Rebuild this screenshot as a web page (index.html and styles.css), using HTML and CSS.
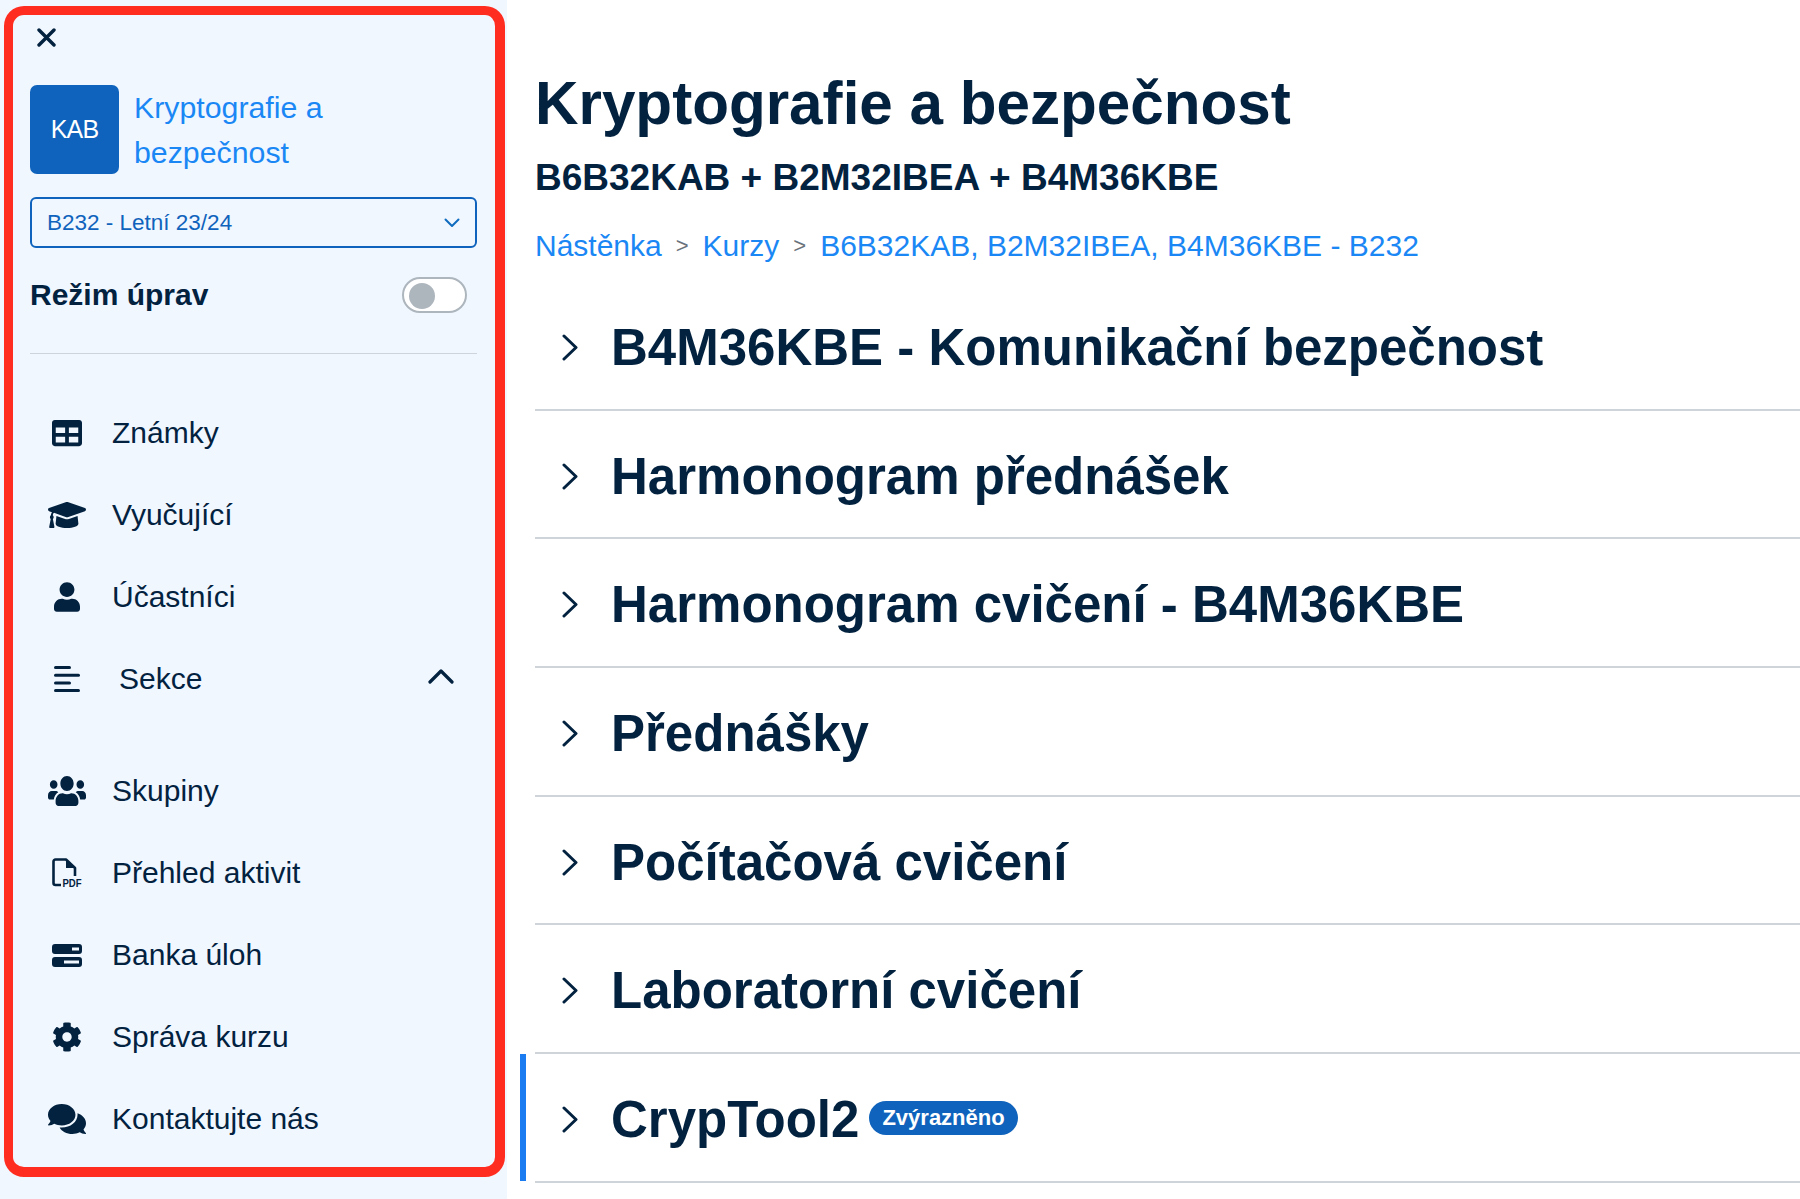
FILE: index.html
```html
<!DOCTYPE html>
<html lang="cs">
<head>
  <meta charset="UTF-8">
  <title>Kryptografie a bezpečnost</title>
  <link rel="stylesheet" href="styles.css">
</head>
<body>
  <aside class="sidebar">
    <div class="frame">
      <button class="close" aria-label="Zavřít">
        <svg viewBox="0 0 19 19" width="19" height="19"><path d="M2 2l15 15M17 2L2 17" fill="none" stroke="#03223f" stroke-width="3.4" stroke-linecap="round"/></svg>
      </button>

      <div class="course">
        <div class="tile">KAB</div>
        <a class="course-name">Kryptografie a bezpečnost</a>
      </div>

      <div class="select">
        <span>B232 - Letní 23/24</span>
        <svg viewBox="0 0 16 10" width="16" height="10"><path d="M1.5 1.5L8 8l6.5-6.5" fill="none" stroke="#0f6cbf" stroke-width="2" stroke-linecap="round" stroke-linejoin="round"/></svg>
      </div>

      <div class="edit-mode">
        <span>Režim úprav</span>
        <div class="toggle"><div class="knob"></div></div>
      </div>

      <hr class="divider">

      <nav class="nav">
        <a class="nav-item">
          <span class="ico"><svg viewBox="0 0 512 512" width="30" height="30"><path d="M464 32H48C21.49 32 0 53.49 0 80v352c0 26.51 21.49 48 48 48h416c26.51 0 48-21.49 48-48V80c0-26.51-21.49-48-48-48zM224 416H64v-96h160v96zm0-160H64v-96h160v96zm224 160H288v-96h160v96zm0-160H288v-96h160v96z"/></svg></span>
          Známky
        </a>
        <a class="nav-item">
          <span class="ico"><svg viewBox="0 64 640 384" width="38" height="26" preserveAspectRatio="none"><path d="M622.34 153.2L343.4 67.5c-15.2-4.67-31.6-4.67-46.79 0L17.66 153.2c-23.54 7.23-23.54 38.36 0 45.59l48.63 14.94c-10.67 13.19-17.23 29.28-17.88 46.9C38.78 266.15 32 276.11 32 288c0 10.78 5.68 19.85 13.86 25.65L20.33 428.53C18.11 438.52 25.71 448 35.94 448h56.11c10.24 0 17.84-9.48 15.62-19.47L82.14 313.65C90.32 307.85 96 298.78 96 288c0-11.57-6.47-21.25-15.66-26.87.76-15.02 8.44-28.3 20.69-36.72L296.6 284.5c9.06 2.78 26.44 6.25 46.79 0l278.95-85.7c23.55-7.24 23.55-38.36 0-45.6zM352.79 315.09c-28.53 8.76-52.84 3.92-65.59 0l-145.02-44.55L128 384c0 35.35 85.96 64 192 64s192-28.65 192-64l-14.18-113.47-145.03 44.56z"/></svg></span>
          Vyučující
        </a>
        <a class="nav-item">
          <span class="ico"><svg viewBox="0 0 448 512" width="26" height="30"><path d="M224 256c70.7 0 128-57.3 128-128S294.7 0 224 0 96 57.3 96 128s57.3 128 128 128zm89.6 32h-16.7c-22.2 10.2-46.9 16-72.9 16s-50.6-5.8-72.9-16h-16.7C60.2 288 0 348.2 0 422.4V464c0 26.5 21.5 48 48 48h352c26.5 0 48-21.5 48-48v-41.6c0-74.2-60.2-134.4-134.4-134.4z"/></svg></span>
          Účastníci
        </a>
        <a class="nav-item nav-sections">
          <span class="ico"><svg viewBox="0 0 26 26" width="26" height="26"><rect x="0" y="0" width="17" height="3" rx="1.5"/><rect x="0" y="7.7" width="26" height="3" rx="1.5"/><rect x="0" y="15.4" width="17" height="3" rx="1.5"/><rect x="0" y="23" width="26" height="3" rx="1.5"/></svg></span>
          <span class="sections-label">Sekce</span>
          <svg class="caret" viewBox="0 0 26 15" width="26" height="15"><path d="M2 13L13 2l11 11" fill="none" stroke="#03223f" stroke-width="3.2" stroke-linecap="round" stroke-linejoin="round"/></svg>
        </a>
        <a class="nav-item nav-after">
          <span class="ico"><svg viewBox="0 32 640 448" width="38" height="30" preserveAspectRatio="none"><path d="M96 224c35.3 0 64-28.7 64-64s-28.7-64-64-64-64 28.7-64 64 28.7 64 64 64zm448 0c35.3 0 64-28.7 64-64s-28.7-64-64-64-64 28.7-64 64 28.7 64 64 64zm32 32h-64c-17.6 0-33.5 7.1-45.1 18.6 40.3 22.1 68.9 62 75.1 109.4h66c17.7 0 32-14.3 32-32v-32c0-35.3-28.7-64-64-64zm-256 0c61.9 0 112-50.1 112-112S381.9 32 320 32 208 82.1 208 144s50.1 112 112 112zm76.8 32h-8.3c-20.8 10-43.9 16-68.5 16s-47.6-6-68.5-16h-8.3C179.6 288 128 339.6 128 403.2V432c0 26.5 21.5 48 48 48h288c26.5 0 48-21.5 48-48v-28.8c0-63.6-51.6-115.2-115.2-115.2zm-223.7-13.4C161.5 263.1 145.6 256 128 256H64c-35.3 0-64 28.7-64 64v32c0 17.7 14.3 32 32 32h65.9c6.3-47.4 34.9-87.3 75.2-109.4z"/></svg></span>
          Skupiny
        </a>
        <a class="nav-item">
          <span class="ico"><svg viewBox="0 0 30 33" width="30" height="33"><path d="M14 28H3.5A2 2 0 0 1 1.5 26V4.5A2 2 0 0 1 3.5 2.5H14L23 11v8" fill="none" stroke="#03223f" stroke-width="2.6" stroke-linejoin="round"/><path d="M14 2.5V11h9z"/><rect x="9" y="20.5" width="21" height="10" fill="#f0f7ff"/><text class="pdf-text" transform="translate(10.5 29.5) scale(.83 1)">PDF</text></svg></span>
          Přehled aktivit
        </a>
        <a class="nav-item">
          <span class="ico"><svg viewBox="0 0 30 23" width="30" height="23"><path fill-rule="evenodd" d="M3 0h24a3 3 0 0 1 3 3v4a3 3 0 0 1-3 3H3a3 3 0 0 1-3-3V3a3 3 0 0 1 3-3zm17 3.5v3h7v-3zM3 13h24a3 3 0 0 1 3 3v4a3 3 0 0 1-3 3H3a3 3 0 0 1-3-3v-4a3 3 0 0 1 3-3zm9 3.5v3h15v-3z"/></svg></span>
          Banka úloh
        </a>
        <a class="nav-item">
          <span class="ico"><svg viewBox="0 0 512 512" width="30" height="30"><path d="M487.4 315.7l-42.6-24.6c4.3-23.2 4.3-47 0-70.2l42.6-24.6c4.9-2.8 7.1-8.6 5.5-14-11.1-35.6-30-67.8-54.7-94.6-3.8-4.1-10-5.1-14.8-2.3L380.8 110c-17.9-15.4-38.5-27.3-60.8-35.1V25.8c0-5.6-3.9-10.5-9.4-11.7-36.7-8.2-74.3-7.8-109.2 0-5.5 1.2-9.4 6.1-9.4 11.7V75c-22.2 7.9-42.8 19.8-60.8 35.1L88.7 85.5c-4.9-2.8-11-1.9-14.8 2.3-24.7 26.7-43.6 58.9-54.7 94.6-1.7 5.4.6 11.2 5.5 14L67.3 221c-4.3 23.2-4.3 47 0 70.2l-42.6 24.6c-4.9 2.8-7.1 8.6-5.5 14 11.1 35.6 30 67.8 54.7 94.6 3.8 4.1 10 5.1 14.8 2.3l42.6-24.6c17.9 15.4 38.5 27.3 60.8 35.1v49.2c0 5.6 3.9 10.5 9.4 11.7 36.7 8.2 74.3 7.8 109.2 0 5.5-1.2 9.4-6.1 9.4-11.7v-49.2c22.2-7.9 42.8-19.8 60.8-35.1l42.6 24.6c4.9 2.8 11 1.9 14.8-2.3 24.7-26.7 43.6-58.9 54.7-94.6 1.5-5.5-.7-11.3-5.6-14.1zM256 336c-44.1 0-80-35.9-80-80s35.9-80 80-80 80 35.9 80 80-35.9 80-80 80z"/></svg></span>
          Správa kurzu
        </a>
        <a class="nav-item">
          <span class="ico"><svg viewBox="0 32 576 448" width="38" height="30" preserveAspectRatio="none"><path d="M416 192c0-88.4-93.1-160-208-160S0 103.6 0 192c0 34.3 14.1 65.9 38 92-13.4 30.2-35.5 54.2-35.8 54.5-2.2 2.3-2.8 5.7-1.5 8.7S4.8 352 8 352c36.6 0 66.9-12.3 88.7-25 32.2 15.7 70.3 25 111.3 25 114.9 0 208-71.6 208-160zm122 220c23.9-26 38-57.7 38-92 0-66.9-53.5-124.2-129.3-148.1.9 6.6 1.3 13.3 1.3 20.1 0 105.9-107.7 192-240 192-10.8 0-21.3-.8-31.7-1.9C207.8 439.6 281.8 480 368 480c41 0 79.1-9.2 111.3-25 21.8 12.7 52.1 25 88.7 25 3.2 0 6.1-1.9 7.3-4.8 1.3-2.9.7-6.3-1.5-8.7-.3-.3-22.4-24.2-35.8-54.5z"/></svg></span>
          Kontaktujte nás
        </a>
      </nav>
    </div>
  </aside>

  <main class="content">
    <h1 class="page-title">Kryptografie a bezpečnost</h1>
    <div class="page-sub">B6B32KAB + B2M32IBEA + B4M36KBE</div>

    <div class="breadcrumb">
      <a>Nástěnka</a>
      <span class="sep">&gt;</span>
      <a>Kurzy</a>
      <span class="sep">&gt;</span>
      <a>B6B32KAB, B2M32IBEA, B4M36KBE - B232</a>
    </div>

    <section class="topic">
      <svg class="chev" viewBox="0 0 16 27" width="16" height="27"><path d="M2 2l12 11.5L2 25" fill="none" stroke="#03223f" stroke-width="3" stroke-linecap="round" stroke-linejoin="round"/></svg>
      <h2>B4M36KBE - Komunikační bezpečnost</h2>
    </section>
    <section class="topic">
      <svg class="chev" viewBox="0 0 16 27" width="16" height="27"><path d="M2 2l12 11.5L2 25" fill="none" stroke="#03223f" stroke-width="3" stroke-linecap="round" stroke-linejoin="round"/></svg>
      <h2>Harmonogram přednášek</h2>
    </section>
    <section class="topic">
      <svg class="chev" viewBox="0 0 16 27" width="16" height="27"><path d="M2 2l12 11.5L2 25" fill="none" stroke="#03223f" stroke-width="3" stroke-linecap="round" stroke-linejoin="round"/></svg>
      <h2>Harmonogram cvičení - B4M36KBE</h2>
    </section>
    <section class="topic">
      <svg class="chev" viewBox="0 0 16 27" width="16" height="27"><path d="M2 2l12 11.5L2 25" fill="none" stroke="#03223f" stroke-width="3" stroke-linecap="round" stroke-linejoin="round"/></svg>
      <h2>Přednášky</h2>
    </section>
    <section class="topic">
      <svg class="chev" viewBox="0 0 16 27" width="16" height="27"><path d="M2 2l12 11.5L2 25" fill="none" stroke="#03223f" stroke-width="3" stroke-linecap="round" stroke-linejoin="round"/></svg>
      <h2>Počítačová cvičení</h2>
    </section>
    <section class="topic">
      <svg class="chev" viewBox="0 0 16 27" width="16" height="27"><path d="M2 2l12 11.5L2 25" fill="none" stroke="#03223f" stroke-width="3" stroke-linecap="round" stroke-linejoin="round"/></svg>
      <h2>Laboratorní cvičení</h2>
    </section>
    <section class="topic highlighted">
      <svg class="chev" viewBox="0 0 16 27" width="16" height="27"><path d="M2 2l12 11.5L2 25" fill="none" stroke="#03223f" stroke-width="3" stroke-linecap="round" stroke-linejoin="round"/></svg>
      <h2>CrypTool2</h2>
      <span class="badge">Zvýrazněno</span>
    </section>
  </main>
</body>
</html>
```

FILE: styles.css
```css
* {
  box-sizing: border-box;
}

html, body {
  height: 100%;
}

body {
  margin: 0;
  display: flex;
  height: 1199px;
  overflow: hidden;
  background-color: #fff;
  color: #03223f;
  font-family: "Liberation Sans", Arial, sans-serif;
}

/* Sidebar */
.sidebar {
  width: 507px;
  flex-shrink: 0;
  background-color: #f0f7ff;
  padding: 6px 2px 22px 4px;
}

.frame {
  height: 100%;
  border: 10px solid #ff2d20;
  border-left-width: 9px;
  border-top-width: 9px;
  border-radius: 20px;
  padding: 13px 18px 0 17px;
}

.close {
  display: block;
  width: 19px;
  height: 19px;
  margin-left: 7px;
  padding: 0;
  border: none;
  background: none;
}

.close svg {
  display: block;
}

.course {
  display: flex;
  align-items: center;
  gap: 15px;
  height: 89px;
  margin-top: 38px;
}

.tile {
  width: 89px;
  height: 89px;
  flex-shrink: 0;
  display: flex;
  align-items: center;
  justify-content: center;
  background-color: #0f63bc;
  border-radius: 7px;
  color: #fff;
  font-size: 25px;
  letter-spacing: -0.8px;
}

.course-name {
  width: 240px;
  color: #1a87f5;
  font-size: 30.3px;
  line-height: 45px;
}

.select {
  display: flex;
  align-items: center;
  justify-content: space-between;
  height: 51px;
  margin-top: 23px;
  padding: 0 15px 0 15px;
  border: 2px solid #0f63bc;
  border-radius: 6px;
  color: #0f63bc;
  font-size: 22.5px;
}

.edit-mode {
  display: flex;
  align-items: center;
  justify-content: space-between;
  margin-top: 29px;
  padding: 0 10px 0 0;
  height: 36px;
  font-size: 30px;
  font-weight: 700;
}

.toggle {
  width: 65px;
  height: 36px;
  padding: 4px 5px;
  border: 2px solid #adb5bd;
  border-radius: 18px;
  background-color: #fff;
}

.knob {
  width: 26px;
  height: 26px;
  border-radius: 50%;
  background-color: #adb5bd;
}

.divider {
  margin: 40px 0 0;
  border: none;
  border-top: 1px solid #ced4da;
}

.nav {
  margin-top: 38px;
}

.nav-item {
  display: flex;
  align-items: center;
  height: 82px;
  font-size: 30px;
  color: #03223f;
}

.nav-after {
  margin-top: 30px;
}

.ico {
  width: 40px;
  margin-left: 17px;
  margin-right: 25px;
  flex-shrink: 0;
  display: flex;
  justify-content: center;
  fill: #03223f;
}

.sections-label {
  margin-left: 7px;
}

.caret {
  margin-left: auto;
  margin-right: 23px;
  margin-top: -6px;
}

.pdf-text {
  font-family: "Liberation Sans", sans-serif;
  font-size: 11.5px;
  font-weight: 700;
  fill: #03223f;
}

/* Main column */
.content {
  flex: 1;
  min-width: 0;
  padding: 0 0 0 28px;
}

.page-title {
  margin: 66px 0 0;
  font-size: 60.2px;
  line-height: 76px;
  font-weight: 700;
}

.page-sub {
  margin-top: 13px;
  font-size: 37px;
  line-height: 46px;
  font-weight: 700;
}

.breadcrumb {
  display: flex;
  align-items: center;
  gap: 14px;
  margin-top: 25px;
  margin-bottom: 16px;
  font-size: 30px;
  line-height: 40px;
  color: #1a87f5;
}

.breadcrumb .sep {
  color: #6a737b;
  font-size: 22px;
}

.topic {
  position: relative;
  display: flex;
  align-items: center;
  height: 128.7px;
  padding-left: 27px;
  padding-top: 4px;
  border-bottom: 2px solid #ced4da;
}

.topic h2 {
  margin: 0 0 0 33px;
  font-size: 51px;
  font-weight: 700;
}

.topic.highlighted::before {
  content: "";
  position: absolute;
  left: -15px;
  top: 0;
  bottom: 0;
  width: 6px;
  background-color: #1a7cf0;
}

.badge {
  margin-left: 10px;
  margin-top: -3px;
  padding: 0 13px;
  height: 34px;
  line-height: 33px;
  border-radius: 17px;
  background-color: #0f63bc;
  color: #fff;
  font-size: 22px;
  font-weight: 700;
}
```
